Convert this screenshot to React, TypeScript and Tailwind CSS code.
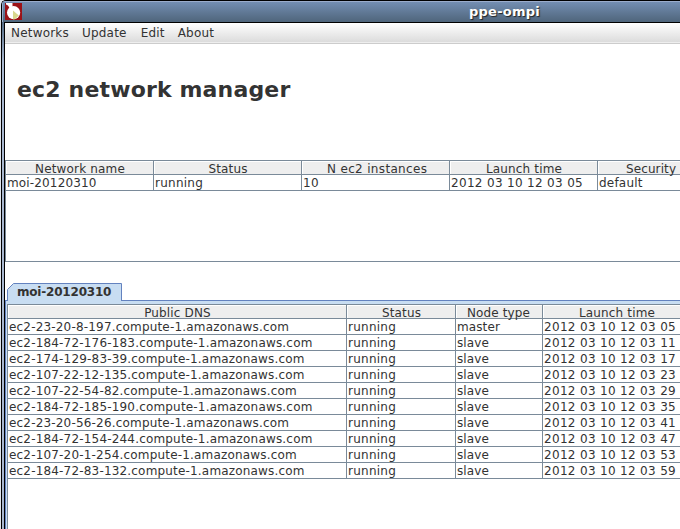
import React from "react";

type Column = { label: string; width: string; head: string; cell: string };

const networkColumns: Column[] = [
  { label: "Network name", width: "w-[148px]", head: "text-center tracking-[0.17px]", cell: "tracking-[0.15px]" },
  { label: "Status", width: "w-[148px]", head: "text-center tracking-[0.15px]", cell: "tracking-[0.25px]" },
  { label: "N ec2 instances", width: "w-[148px]", head: "pl-[24px] tracking-[0.33px]", cell: "tracking-[0.35px]" },
  { label: "Launch time", width: "w-[148px]", head: "text-center tracking-[0.15px]", cell: "tracking-[0.32px]" },
  { label: "Security", width: "w-[84px]", head: "pl-[27px] tracking-[0.1px]", cell: "tracking-[0.2px]" },
];

const instanceColumns: Column[] = [
  { label: "Public DNS", width: "w-[339px]", head: "text-center tracking-[0.15px]", cell: "pl-px tracking-[0.18px]" },
  { label: "Status", width: "w-[109px]", head: "text-center tracking-[0.15px]", cell: "tracking-[0.25px]" },
  { label: "Node type", width: "w-[87px]", head: "pl-[10px] tracking-[0.12px]", cell: "tracking-[0.1px]" },
  { label: "Launch time", width: "w-[148px]", head: "text-center tracking-[0.15px]", cell: "tracking-[0.32px]" },
];

const hosts: [string, string, string][] = [
  ["23-20-8-197", "master", "05"],
  ["184-72-176-183", "slave", "11"],
  ["174-129-83-39", "slave", "17"],
  ["107-22-12-135", "slave", "23"],
  ["107-22-54-82", "slave", "29"],
  ["184-72-185-190", "slave", "35"],
  ["23-20-56-26", "slave", "41"],
  ["184-72-154-244", "slave", "47"],
  ["107-20-1-254", "slave", "53"],
  ["184-72-83-132", "slave", "59"],
];

function Table({ columns, rows }: { columns: Column[]; rows: string[][] }) {
  return (
    <div className="w-max border-l border-t border-[#7a8a99]">
      <div className="flex h-[14px] border-b border-[#7a8a99]">
        {columns.map((c) => (
          <div key={c.label} className={`${c.width} shrink-0 border-r border-[#7a8a99]`}>
            <div className={`h-[13px] border-l border-t border-white bg-[#eeeeee] leading-[14px] ${c.head}`}>
              {c.label}
            </div>
          </div>
        ))}
      </div>
      {rows.map((row, r) => (
        <div key={r} className="flex h-[16px] border-b border-[#7a8a99]">
          {row.map((text, i) => (
            <div
              key={i}
              className={`${columns[i].width} shrink-0 border-r border-[#7a8a99] pl-px leading-[17px] ${columns[i].cell}`}
            >
              {text}
            </div>
          ))}
        </div>
      ))}
    </div>
  );
}

function AppIcon() {
  return (
    <svg width="17" height="17" viewBox="0 0 17 17" className="shrink-0">
      <rect width="17" height="17" fill="#9b1217" />
      <path d="M1 0H7.5V5H4.5L3 2.5L1 1.5Z" fill="#fff" />
      <circle cx="8.6" cy="9.6" r="6.6" fill="#fff" />
      <path d="M8 7.5V16.2H10L13.8 12.6Z" fill="#d8d78e" />
    </svg>
  );
}

export default function App() {
  return (
    <div className="h-[529px] w-[680px] overflow-hidden bg-[#dfe4ec] pl-px font-['DejaVu_Sans',sans-serif] text-[12px] whitespace-pre text-[#333333]">
      <div className="flex h-full flex-col overflow-hidden rounded-tl-[5px] border-t border-l border-black bg-[#a9b8d0]">
        <header className="flex h-[21px] shrink-0 items-start bg-linear-to-b from-[#7590b5] to-[#4f657b] pt-[2px] pl-[3px] shadow-[inset_1px_1px_#9aaccb]">
          <AppIcon />
          <div className="ml-[447px] text-[13px] leading-[17px] font-bold tracking-[0.25px] text-white [text-shadow:1px_1px_1px_#222]">
            ppe-ompi
          </div>
        </header>
        <div className="flex min-h-0 flex-1">
          <div className="w-[2px] shrink-0 bg-linear-to-b from-[#536b85] to-[#a9b8d0] to-[40px]" />
          <main className="flex min-w-0 flex-1 flex-col border-t border-l border-black bg-white">
            <nav className="flex h-[21px] shrink-0 gap-[13px] border-b border-[#cccccc] bg-linear-to-b from-white to-[#dadada] pl-[6px] leading-[21px] tracking-[0.2px] shadow-[inset_0_-1px_#eeeeee]">
              <span>Networks</span>
              <span>Update</span>
              <span className="ml-px">Edit</span>
              <span>About</span>
            </nav>
            <h1 className="mt-[31px] h-[85px] shrink-0 pl-[12px] text-[22px] leading-[30px] font-bold tracking-[0.16px]">ec2 network manager</h1>
            <section className="h-[102px] shrink-0 overflow-hidden border-b border-[#7a8a99]">
              <div className="h-full border-l border-[#7a8a99]">
                <div className="-ml-px">
                  <Table columns={networkColumns} rows={[["moi-20120310", "running", "10", "2012 03 10 12 03 05", "default"]]} />
                </div>
              </div>
            </section>
            <div className="mt-[21px] h-[18px] shrink-0">
              <div className="relative z-10 ml-[2px] h-[18px] w-[115px]">
                <svg width="115" height="18" className="absolute inset-0">
                  <path d="M.5 18V6.5L6.5.5H114.5V18" fill="#c8ddf2" stroke="#6382bf" />
                </svg>
                <div className="relative pl-[10px] leading-[18px] font-bold tracking-[-0.2px]">moi-20120310</div>
              </div>
            </div>
            <section className="-mt-px min-h-0 flex-1 overflow-hidden border-l border-t border-[#6382bf] bg-[#c8ddf2] pt-[3px] pl-px">
              <div className="h-full border-l border-[#7a8a99] bg-white">
                <div className="-ml-px">
                  <Table
                    columns={instanceColumns}
                    rows={hosts.map(([ip, type, sec]) => [`ec2-${ip}.compute-1.amazonaws.com`, "running", type, `2012 03 10 12 03 ${sec}`])}
                  />
                </div>
              </div>
            </section>
          </main>
        </div>
      </div>
    </div>
  );
}
